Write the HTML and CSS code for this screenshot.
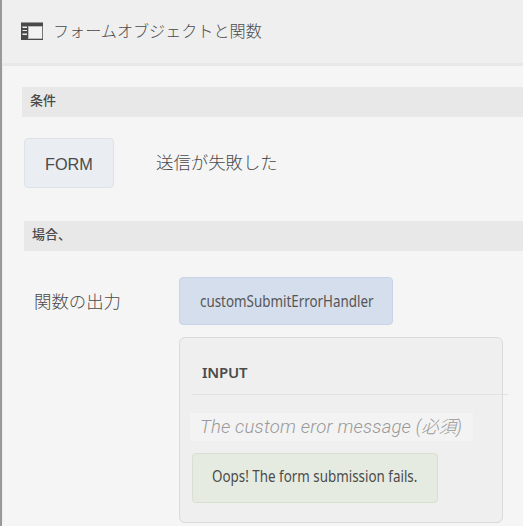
FILE: index.html
```html
<!DOCTYPE html>
<html lang="ja">
<head>
<meta charset="utf-8">
<title>フォームオブジェクトと関数</title>
<link rel="stylesheet" href="styles.css">
</head>
<body>
<div class="app">
  <header class="header">
    <svg class="rail-icon" width="22" height="18" viewBox="0 0 22 18" shape-rendering="crispEdges">
      <path fill="#494949" d="M0 1h22v17H0z"/>
      <path fill="#999" d="M0 0h22v1H0z"/>
      <path fill="#777" d="M21 4h1v13h-1z"/>
      <path fill="#bbb" d="M7 4h14v13H7z"/>
      <path fill="#f2f2f2" d="M8 5h13v11H8z"/>
      <path fill="#999" d="M1 4h5v2H1zM1 8h5v1H1zM1 11h5v2H1z"/>
      <path fill="#eee" d="M2 5h4v1H2zM2 8h4v1H2zM2 12h4v1H2z"/>
    </svg>
    <h1 class="title">フォームオブジェクトと関数</h1>
  </header>
  <main class="content">
    <h2 class="section">条件</h2>
    <div class="row condition">
      <div class="chip form">FORM</div>
      <span class="label state">送信が失敗した</span>
    </div>
    <h2 class="section then">場合、</h2>
    <div class="row action">
      <span class="label output">関数の出力</span>
      <div class="result">
        <div class="chip handler"><span class="narrow">customSubmitErrorHandler</span></div>
        <section class="panel">
          <h3 class="input-title">INPUT</h3>
          <div class="param">The custom eror message <span class="required">(必須)</span></div>
          <div class="chip message"><span class="narrow">Oops! The form submission fails.</span></div>
        </section>
      </div>
    </div>
  </main>
</div>
</body>
</html>
```
FILE: styles.css
```css
* { box-sizing: border-box; }
body {
  margin: 0;
  background: #f5f5f5;
  color: #4b4b4b;
  font-family: "Noto Sans", "Noto Sans CJK JP", sans-serif;
  overflow: hidden;
}
.app {
  width: 523px;
  height: 526px;
  border-left: 2px solid #999;
  overflow: hidden;
}
.header {
  display: flex;
  align-items: flex-start;
  height: 66px;
  padding: 22px 0 0 19px;
  background: #efefef;
  border-bottom: 3px solid #e8e8e8;
}
.rail-icon { display: block; flex: none; }
h1, h2, h3 { margin: 0; }
.title {
  margin-left: 10px;
  margin-top: -4px;
  font: 300 16.1px/24px "Noto Sans CJK JP", sans-serif;
  white-space: nowrap;
}
.content {
  padding: 21px 0 0 19px;
  border-left: 1px solid #ececec;
}
.section {
  height: 30px;
  padding-left: 8px;
  background: #e8e8e8;
  font: 500 13px/26px "Noto Sans CJK JP", sans-serif;
}
.row { display: flex; white-space: nowrap; }
.condition { margin: 21px 0 0 2px; align-items: center; }
.chip {
  display: flex;
  align-items: center;
  border: 1px solid;
  border-radius: 4px;
  white-space: nowrap;
}
.form {
  width: 90px;
  height: 50px;
  padding: 3px 0 0 20px;
  background: #eaeef3;
  border-color: #dce2e7;
  font: 16.3px "Liberation Sans", sans-serif;
}
.label { font: 300 17.4px/26px "Noto Sans CJK JP", sans-serif; }
.state { margin-left: 42px; margin-top: -3px; }
.then { margin: 33px 0 0 2px; }
.action { margin: 26px 0 0 12px; }
.output { width: 145px; padding: 11px 0 0 0; }
.narrow {
  display: inline-block;
  transform: scaleX(0.87);
  transform-origin: left center;
}
.handler {
  width: 214px;
  height: 48px;
  padding-left: 19.5px;
  background: #d5deec;
  border-color: #c8d4e6;
  color: #555;
  font-size: 15.4px;
}
.panel {
  width: 324px;
  height: 186px;
  margin-top: 12px;
  padding: 20px 0 0 12px;
  background: #efefef;
  border: 1px solid #dadada;
  border-radius: 6px;
}
.input-title {
  width: 316px;
  height: 37px;
  padding-left: 10px;
  border-bottom: 1px solid #e1e1e1;
  font: 600 15px/28px "Noto Sans", sans-serif;
  letter-spacing: -0.2px;
}
.param {
  width: 283px;
  height: 28px;
  margin: 18px 0 0 -2px;
  padding-left: 10px;
  background: #f3f3f3;
  color: #999;
  font: italic 300 18.5px/29px Roboto, "Noto Sans CJK JP", sans-serif;
  letter-spacing: 0.2px;
}
.required { font-size: 17.5px; letter-spacing: 0; }
.message {
  width: 246px;
  height: 50px;
  margin-top: 12px;
  padding: 0 0 3px 19px;
  background: #e6ebe1;
  border-color: #d7dfd0;
  font-size: 15.4px;
}
```
